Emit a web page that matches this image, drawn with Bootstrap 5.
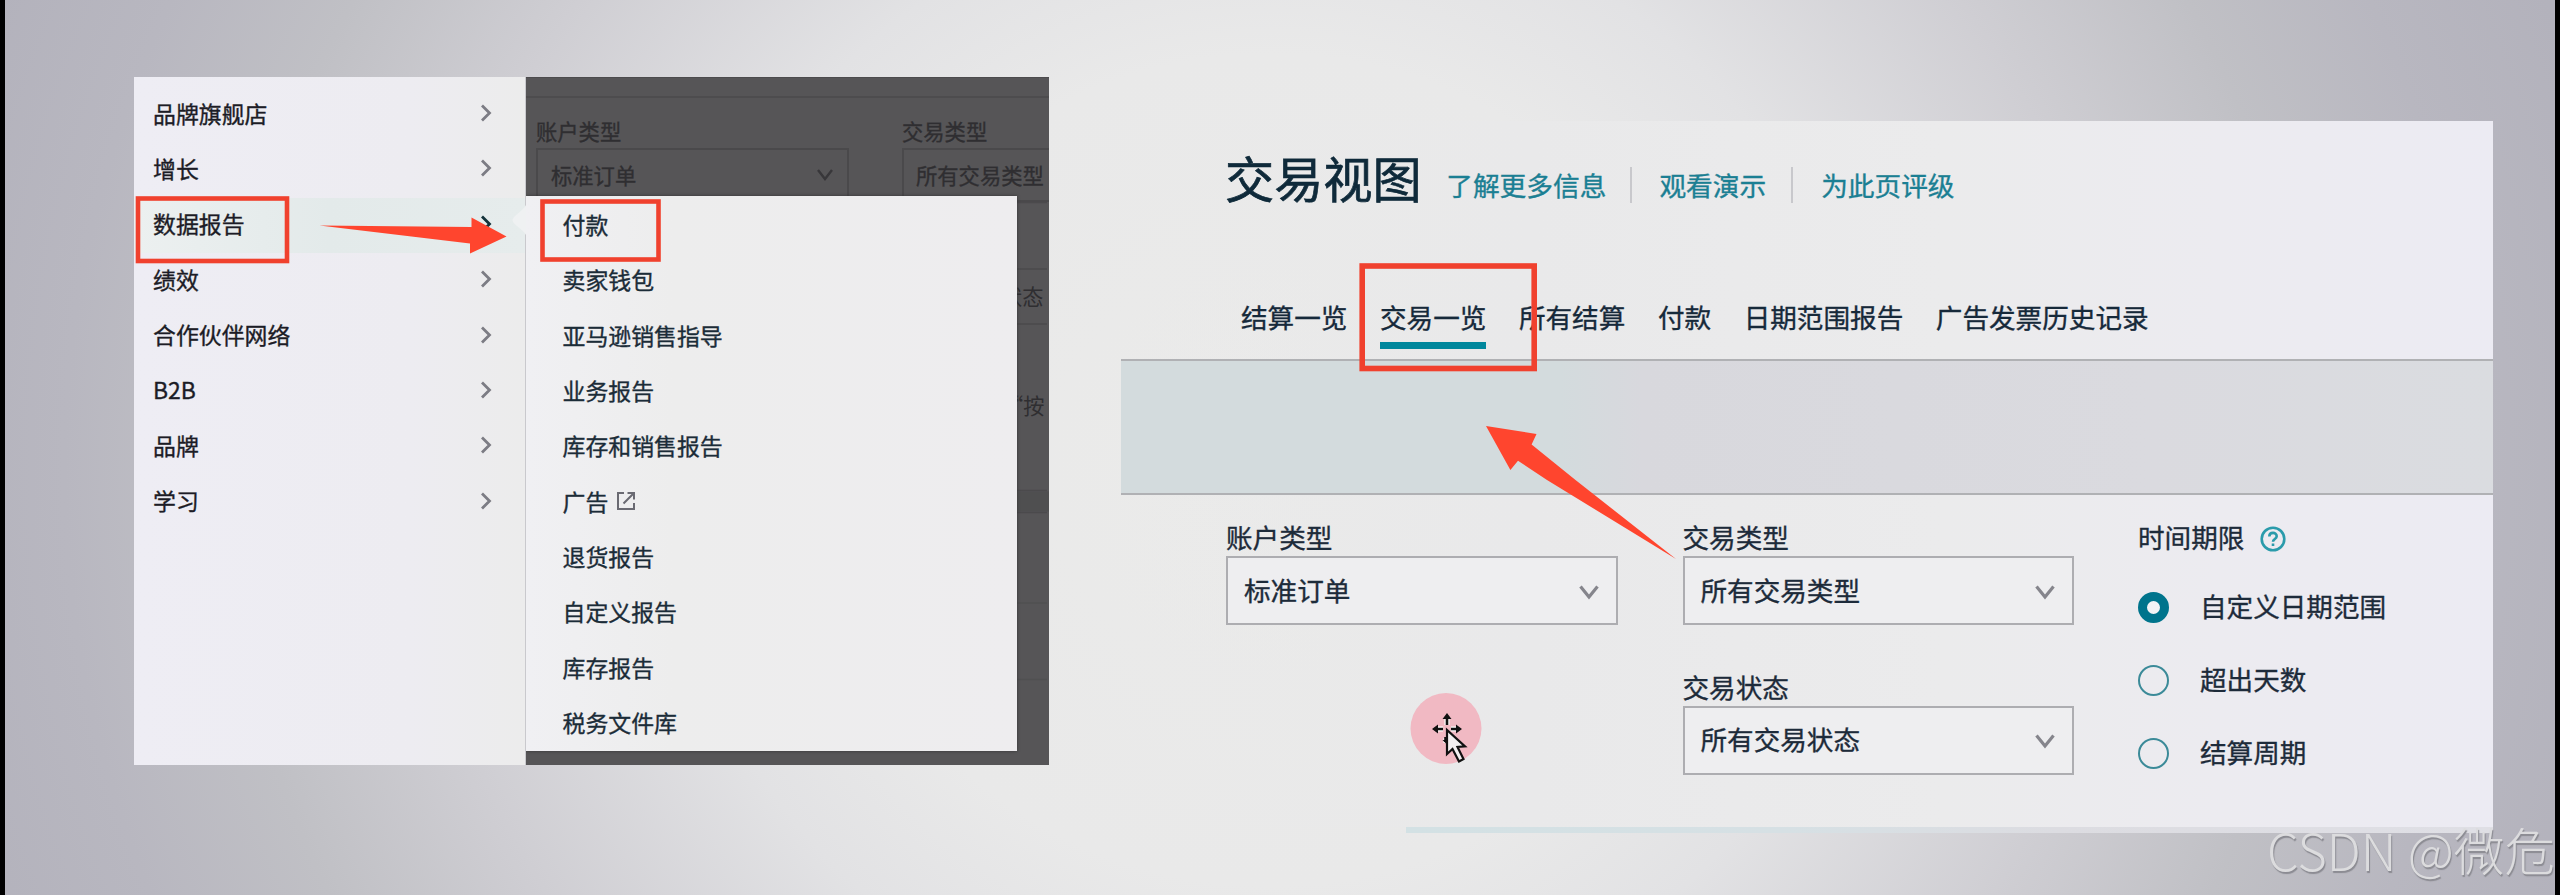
<!DOCTYPE html>
<html lang="zh-CN">
<head>
<meta charset="utf-8">
<meta name="viewport" content="width=device-width, initial-scale=1">
<title>交易视图</title>
<link href="https://cdn.jsdelivr.net/npm/bootstrap@5.3.0/dist/css/bootstrap.min.css" rel="stylesheet">
<style>
  body { font-family: "Noto Sans CJK SC", sans-serif; color: #1d2b3a; background: #000; overflow: hidden; -webkit-text-stroke: .35px; }
  .stage { width: 2560px; height: 895px; border: solid #000; border-width: 0 5px;
    background: radial-gradient(ellipse 1370px 1300px at 1265px 470px, #ebebea 0, #e9e9e9 32%, #e2e2e4 44%, #cfced3 62%, #c0c0c5 76%, #b8b7c0 88%, #b3b2bc 100%); }
  a { text-decoration: none; }
  /* navigation card */
  .nav-card { width: 914.5px; height: 688px; margin: 77px 0 0 129px; }
  .side { width: 391.5px; padding-top: 9.8px; background: linear-gradient(90deg, #eeedf4, #edecf1 70%, #ececec); border-right: 1px solid #c9c9cd; }
  .side-item { height: 55.4px; padding: 0 33px 3px 19px; font-size: 22.9px; color: #1c1c26; line-height: 1; }
  .side-item.current { background: linear-gradient(90deg, #ecf0f0, #e3eaea 50%, #e6ecec); }
  .side-item svg { stroke: #7c7c84; }
  .side-item.current svg { stroke: #14323a; }
  .dimmed { background: #565557; color: #2f2e31; font-size: 21.3px; line-height: 30px; border-top: 1px solid #4c4b4d; }
  .dim-rule { height: 20px; border-bottom: 2px solid #4d4c4e; }
  .dim-box { height: 54px; border: 2px solid #4a494b; }
  .dim-strip { right: 0; width: 33px; }
  .flyout { left: 0; top: 118px; width: 491px; height: 555px; background: linear-gradient(90deg, #f0f0f3, #ededed 30%, #eeedef); box-shadow: 0 0 3px #333; padding-top: 1.5px; }
  .fly-item { height: 55.4px; padding: 0 0 2px 37px; font-size: 22.9px; line-height: 1; color: #1b2c38; }
  /* transaction view card */
  .view-card { width: 1372px; height: 706px; margin: 121px 0 0 72px; background: linear-gradient(90deg, #e9e9e900 0, #e9e9ea 30%, #ebebec 60%, #ecebf0 80%, #ecebf3 100%); }
  .view-head { height: 238px; padding: 26px 0 0 104.5px; }
  .view-title { font-size: 49.2px; line-height: 60px; color: #0f2a3a; font-weight: 400; -webkit-text-stroke: .7px; }
  .view-link { font-size: 26.7px; line-height: 36px; color: #1b7f93; }
  .bar-sep { width: 2px; height: 36px; background: #c8c8cc; }
  .view-tabs { margin-top: 85px; padding-left: 16px; gap: 32.6px; }
  .view-tab { font-size: 26.6px; line-height: 50px; padding: 0; color: #16293a; border-bottom: 7px solid transparent; }
  .view-tab.on { border-color: #00879c; }
  .grey-band { height: 136px; border: solid #b0b1b4; border-width: 2px 0; background: linear-gradient(90deg, #d3dbdd 0, #d3dbdd 32%, #d8d8dd 38%, #dadadf 75%, #dadce0 100%); }
  .filters { padding: 25px 0 0 105.5px; font-size: 26.6px; }
  .f-label { line-height: 34px; margin-bottom: 2px; }
  .f-select { width: 391.5px; height: 69px; border: 2px solid #adadb1; background: #eeeef0; padding: 0 17px 1px 16px; line-height: 1; }
  .f-gap { margin-top: 44.5px; }
  .radio-row { height: 73px; gap: 31px; line-height: 1; }
  .dot { width: 31px; height: 31px; border: 2.4px solid #3b8a98; border-radius: 50%; margin-top: 1px; }
  .dot.on { border: 9px solid #00748c; background: #f3f3f5; }
  .radio-row span:last-child { padding-bottom: 2px; }
  .end-line { height: 6px; margin-left: 285px; width: 1087px; background: linear-gradient(90deg, #d3e1e4, #d6e0e4 35%, #dcdce1 60%, #dfdfe5); }
  .csdn { right: 0; bottom: 11px; font-size: 50.6px; line-height: 70px; font-weight: 300; color: #dcdcde; text-shadow: 1px 2px 1px #8b8b92; white-space: pre; -webkit-text-stroke: 0; }
</style>
</head>
<body>
<main class="stage position-relative d-flex align-items-start overflow-hidden">

  <section class="nav-card d-flex flex-shrink-0">
    <nav class="side flex-shrink-0" id="side"></nav>
    <div class="dimmed position-relative flex-grow-1 overflow-hidden">
      <div class="dim-rule"></div>
      <div class="d-flex" style="padding:18px 0 0 10.5px">
        <div class="flex-shrink-0" style="width:366px">
          <div>账户类型</div>
          <div class="dim-box d-flex justify-content-between align-items-center" style="width:313px;margin-top:2px;padding:0 13px">
            <span>标准订单</span>
            <svg width="18" height="12" fill="none" stroke="#38373a" stroke-width="2.4"><path d="M2 1l7 9 7-9"/></svg>
          </div>
        </div>
        <div class="flex-shrink-0" style="width:200px">
          <div>交易类型</div>
          <div class="dim-box d-flex align-items-center text-nowrap" style="margin-top:2px;padding-left:12px">所有交易类型</div>
        </div>
      </div>
      <div class="dim-strip position-absolute top-0 bottom-0 text-nowrap">
        <svg class="d-block" width="33" height="688" fill="none" stroke="#4b4a4c" stroke-width="1.600">
          <path d="M0 124.500h31M0 191h31M0 246h31M0 412.500h31M0 434.500h31"/>
          <path d="M0 525h31M0 601.500h31" stroke="#505051"/>
          <path d="M0 413.500h33v20H0z" fill="#4f4f50" stroke="none"/>
          <g fill="#2f2e31" stroke="none" font-size="21.200"><text x="-15" y="227">状态</text><text x="-14" y="335.500">“按</text></g>
        </svg>
      </div>
      <div class="flyout position-absolute" id="fly"></div>
    </div>
  </section>

  <section class="view-card flex-shrink-0">
    <header class="view-head">
      <div class="d-flex align-items-center">
        <h1 class="view-title m-0">交易视图</h1>
        <div class="d-flex align-items-center" style="margin:16px 0 0 24.5px">
          <a class="view-link">了解更多信息</a>
          <span class="bar-sep" style="margin:0 27px 0 24px"></span>
          <a class="view-link">观看演示</a>
          <span class="bar-sep" style="margin:0 28px 0 25px"></span>
          <a class="view-link">为此页评级</a>
        </div>
      </div>
      <nav class="view-tabs d-flex">
        <a class="view-tab">结算一览</a>
        <a class="view-tab on">交易一览</a>
        <a class="view-tab">所有结算</a>
        <a class="view-tab">付款</a>
        <a class="view-tab">日期范围报告</a>
        <a class="view-tab">广告发票历史记录</a>
      </nav>
    </header>
    <div class="grey-band"></div>
    <form class="filters d-flex" style="height:332px">
      <div style="margin-right:65px">
        <div class="f-label">账户类型</div>
        <div class="f-select d-flex justify-content-between align-items-center"><span>标准订单</span><svg style="margin-top:3px" width="20" height="16" fill="none" stroke="#85858c" stroke-width="3.2"><path d="M1.500 2.500l8.500 10.500 8.500-10.500"/></svg></div>
      </div>
      <div style="margin-right:64px">
        <div class="f-label">交易类型</div>
        <div class="f-select d-flex justify-content-between align-items-center"><span>所有交易类型</span><svg style="margin-top:3px" width="20" height="16" fill="none" stroke="#85858c" stroke-width="3.2"><path d="M1.500 2.500l8.500 10.500 8.500-10.500"/></svg></div>
        <div class="f-label f-gap">交易状态</div>
        <div class="f-select d-flex justify-content-between align-items-center"><span>所有交易状态</span><svg style="margin-top:3px" width="20" height="16" fill="none" stroke="#85858c" stroke-width="3.2"><path d="M1.500 2.500l8.500 10.500 8.500-10.500"/></svg></div>
      </div>
      <div>
        <div class="f-label d-flex align-items-center" style="margin-bottom:16.5px">时间期限
          <svg style="margin:4px 0 0 16px" width="26" height="26" viewBox="0 0 26 26" fill="none" stroke="#2a9bab" stroke-width="2.6"><circle cx="13" cy="13" r="11.300"/><path d="M9.300 10.600c0-5 7.400-4.800 7.400-.4 0 2.800-3.700 2.700-3.700 5.500M13 17.500v2.600"/></svg>
        </div>
        <div class="radio-row d-flex align-items-center"><span class="dot on"></span><span>自定义日期范围</span></div>
        <div class="radio-row d-flex align-items-center"><span class="dot"></span><span>超出天数</span></div>
        <div class="radio-row d-flex align-items-center"><span class="dot"></span><span>结算周期</span></div>
      </div>
    </form>
    <div class="end-line"></div>
  </section>

  <!-- callouts and pointer drawn over the page; x origin sits after the 5px side bar -->
  <svg class="position-absolute top-0 start-0" width="2550" height="895" viewBox="5 0 2550 895" fill="none">
    <path d="M526 205C523 211 513 216 512.500 220S523 229 526 235z" fill="#eff1f2"/>
    <g stroke="#f0412e" stroke-width="4.600">
      <rect x="138" y="198.500" width="149" height="62.500"/>
      <rect x="542.500" y="201.500" width="116" height="58"/>
      <rect x="1362.200" y="266" width="172" height="102.500" stroke-width="5.600"/>
    </g>
    <g fill="#ff452e">
      <path d="M319.500 225.500L471.500 227V217.500L506.500 236.500 470 253.500V243.500z"/>
      <path d="M1486 426L1536.500 434 1531.600 444.500 1575.500 480 1676 559 1547 480 1518 460.700 1510.400 470z"/>
    </g>
    <circle cx="1446" cy="728.500" r="35.500" fill="#f1b9c3"/>
    <path d="M1447 717v8M1436 729h7M1451 729h7M1446 738v5" stroke="#fff" stroke-width="5"/>
    <path d="M1447 718v7M1437 729h6M1451 729h6M1445.500 737v5" stroke="#111" stroke-width="2.600"/>
    <path d="M1447 713l4.500 6h-9zM1432 729l6-4.500v9zM1462 729l-6-4.500v9zM1442.500 740h4v4z" fill="#111"/>
    <path d="M1447 730V754l5.500-5 6.500 12.500 4.500-2.500-6-12 7.500-.6z" fill="#f3f0f1" stroke="#111" stroke-width="2.200"/>
  </svg>

  <div class="csdn position-absolute">CSDN @微危</div>
</main>
<script src="https://cdn.jsdelivr.net/npm/bootstrap@5.3.0/dist/js/bootstrap.bundle.min.js"></script>
<script>
  const side = ['品牌旗舰店', '增长', '数据报告', '绩效', '合作伙伴网络', 'B2B', '品牌', '学习'];
  document.getElementById('side').innerHTML = side.map(t =>
    `<a class="side-item d-flex align-items-center justify-content-between${t === '数据报告' ? ' current' : ''}"><span>${t}</span><svg width="12" height="18" fill="none" stroke-width="2.8"><path d="M2 1.500l7.500 7.500L2 16.500"/></svg></a>`).join('');
  const fly = ['付款', '卖家钱包', '亚马逊销售指导', '业务报告', '库存和销售报告', '广告', '退货报告', '自定义报告', '库存报告', '税务文件库'];
  const ext = '<svg style="margin-left:8px" width="20" height="20" fill="none" stroke="#6a6a72" stroke-width="2"><path d="M8 2H2v16h16v-6M7.500 12.500L17 3M11.500 2H18v6.500"/></svg>';
  document.getElementById('fly').innerHTML = fly.map(t =>
    `<a class="fly-item d-flex align-items-center"><span>${t}</span>${t === '广告' ? ext : ''}</a>`).join('');
</script>
</body>
</html>
